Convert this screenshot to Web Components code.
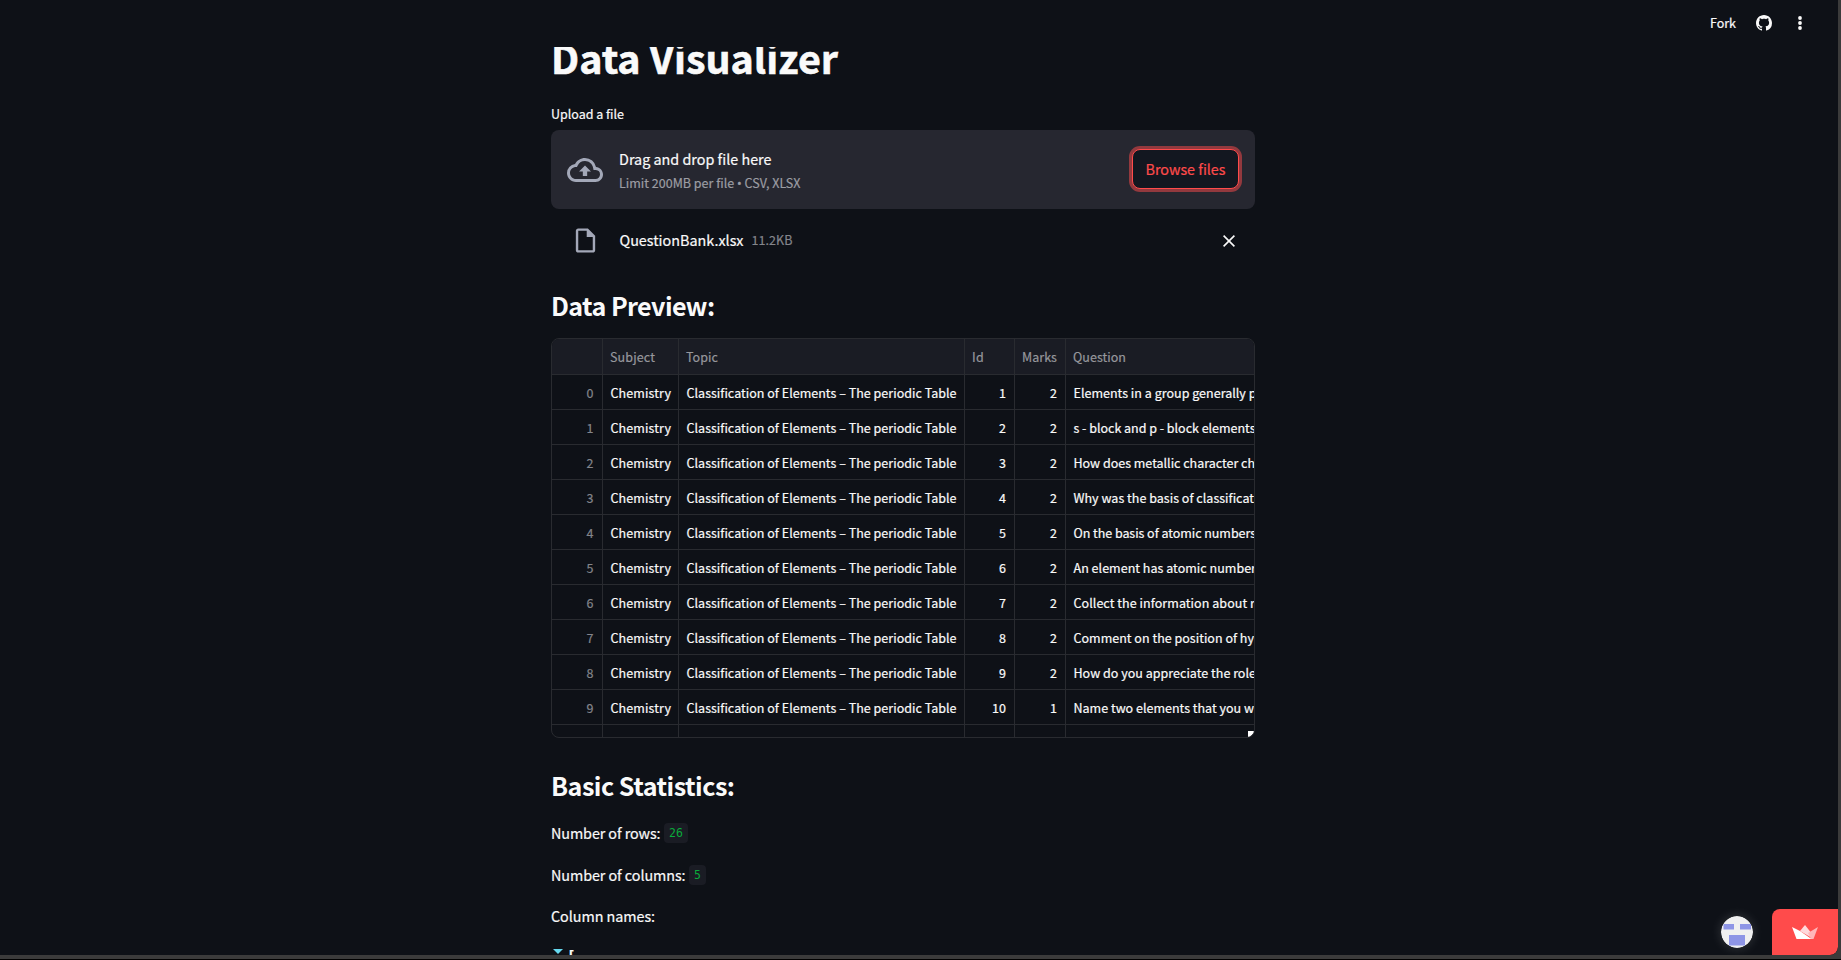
<!DOCTYPE html>
<html lang="en">
<head>
<meta charset="utf-8">
<title>Data Visualizer</title>
<style>
html,body{margin:0;height:100%;overflow:hidden;background:#0e1117}
body{font-family:"Noto Sans CJK SC","Noto Sans",sans-serif;color:#fafafa;-webkit-text-stroke:.2px}
</style>
</head>
<body>
<app-window>
  <app-toolbar slot="toolbar"></app-toolbar>
  <section-title level="1">Data Visualizer</section-title>
  <file-uploader label="Upload a file">
    <uploaded-file name="QuestionBank.xlsx" size="11.2KB"></uploaded-file>
  </file-uploader>
  <section-title level="2">Data Preview:</section-title>
  <data-grid></data-grid>
  <section-title level="2" class="stats">Basic Statistics:</section-title>
  <stat-line value="26" style="--w:109.500px">Number of rows:</stat-line>
  <stat-line value="5" style="--w:134.500px">Number of columns:</stat-line>
  <stat-line style="--w:104px">Column names:</stat-line>
  <json-view></json-view>
  <host-badges slot="badges"></host-badges>
</app-window>
<script>
const make = (tag, html, after) => customElements.define(tag, class extends HTMLElement {
  constructor(){ super(); this.attachShadow({mode:'open'}); }
  connectedCallback(){
    this.shadowRoot.innerHTML = typeof html === 'function' ? html(this) : html;
    if (after) after(this);
  }
});

/* Text run stretched by tracking to an exact advance width */
customElements.define('fit-text', class extends HTMLElement {
  constructor(){
    super();
    this.attachShadow({mode:'open'}).innerHTML =
      '<style>:host{display:inline-block;white-space:pre}span{display:inline-block}</style><span><slot></slot></span>';
  }
  connectedCallback(){
    const w = parseFloat(this.getAttribute('w'));
    if (!w) return;
    const s = this.shadowRoot.querySelector('span');
    const n = this.textContent.length;
    const now = s.getBoundingClientRect().width;
    s.style.letterSpacing = ((w - now) / n) + 'px';
  }
});

make('app-window', `<style>
:host{display:grid;grid-template:955px 5px / 1838px 3px;width:1841px;height:960px;background:#3b3b3b;overflow:hidden}
.view{grid-area:1/1;background:#0e1117;overflow:hidden;position:relative;display:flex;flex-direction:column;border-bottom-right-radius:8px}
main{flex:1;width:704px;padding-left:551px;display:flex;flex-direction:column;overflow:hidden}
.badges{position:absolute;right:0;bottom:0}
.edge{grid-area:2/1/3/3;background:#000;margin-top:4px}
</style><div class="view"><slot name="toolbar"></slot><main><slot></slot></main><div class="badges"><slot name="badges"></slot></div></div><div class="edge"></div>`);

make('app-toolbar', `<style>
:host{display:flex;height:47px;flex:none;align-items:center;justify-content:flex-end;padding:0 30px 1px 0;box-sizing:border-box;color:#fafafa;font-size:12.5px}
.fork{margin:-1px 20px 0 0}
svg{display:block;fill:#fafafa}
.gh{margin-right:20px}
</style><fit-text class="fork" w="26">Fork</fit-text>
<svg class="gh" width="16" height="16" viewBox="0 0 16 16"><path d="M8 0C3.58 0 0 3.58 0 8c0 3.54 2.29 6.53 5.47 7.59.4.07.55-.17.55-.38 0-.19-.01-.82-.01-1.49-2.01.37-2.53-.49-2.69-.94-.09-.23-.48-.94-.82-1.13-.28-.15-.68-.52-.01-.53.63-.01 1.08.58 1.23.82.72 1.21 1.87.87 2.33.66.07-.52.28-.87.51-1.07-1.78-.2-3.64-.89-3.64-3.95 0-.87.31-1.59.82-2.15-.08-.2-.36-1.02.08-2.12 0 0 .67-.21 2.2.82.64-.18 1.32-.27 2-.27s1.36.09 2 .27c1.53-1.04 2.2-.82 2.2-.82.44 1.1.16 1.92.08 2.12.51.56.82 1.27.82 2.15 0 3.07-1.87 3.75-3.65 3.95.29.25.54.73.54 1.48 0 1.07-.01 1.93-.01 2.2 0 .21.15.46.55.38A8.01 8.01 0 0 0 16 8c0-4.42-3.58-8-8-8z"/></svg>
<svg width="16" height="16" viewBox="0 0 16 16"><circle cx="8" cy="3" r="1.9"/><circle cx="8" cy="8" r="1.9"/><circle cx="8" cy="13" r="1.9"/></svg>`);

make('section-title', el => {
  const one = el.getAttribute('level') === '1';
  const stats = el.classList.contains('stats');
  return `<style>
:host{display:block;flex:none;${one ? 'height:58px;margin-top:0' : 'height:36px;margin-top:' + (stats ? '29px;margin-bottom:18' : 16) + 'px'}}
h1,h2{margin:0;font-weight:700;white-space:nowrap}
h1{font-size:39.4px;line-height:52px;transform:translateY(-16px);-webkit-text-stroke:.6px}
h2{font-size:25.1px;line-height:36px;-webkit-text-stroke:0}
</style>${one ? '<h1>' : '<h2>'}<fit-text w="${one ? 287 : stats ? 183.5 : 163.5}">${el.textContent}</fit-text>${one ? '</h1>' : '</h2>'}`;
});

make('file-uploader', el => `<style>
:host{display:block;flex:none}
.label{font-size:12.5px;line-height:18px;height:25px}
.drop{height:79px;border-radius:8px;background:#262730;display:flex;align-items:center;padding:0 16px 1px;box-sizing:border-box}
.cloud{fill:#a3a8b8;width:36px;height:36px;margin:1px 16px 0 0;flex:none}
.text{flex:1;display:flex;flex-direction:column;padding-top:3px}
.big{font-size:14.35px;line-height:25px}
.small{font-size:12.5px;line-height:24px;color:#9c9da3}
.dot{font-family:"Noto Sans",sans-serif}
button{font:14.35px/24px "Noto Sans CJK SC","Noto Sans",sans-serif;color:#ff4b4b;background:#131720;border:1px solid #ff4b4b;border-radius:8px;width:107px;height:40px;padding:0;box-shadow:0 0 0 3px rgba(255,75,75,.5)}
</style><div class="label"><fit-text w="73">${el.getAttribute('label')}</fit-text></div>
<div class="drop"><svg class="cloud" viewBox="0 0 24 24"><path d="M19.35 10.04A7.49 7.49 0 0 0 12 4C9.11 4 6.6 5.64 5.35 8.04A5.994 5.994 0 0 0 0 14c0 3.31 2.69 6 6 6h13c2.76 0 5-2.24 5-5 0-2.64-2.05-4.78-4.65-4.96zM19 18H6c-2.21 0-4-1.79-4-4 0-2.05 1.53-3.76 3.56-3.97l1.07-.11.5-.95A5.469 5.469 0 0 1 12 6c2.62 0 4.88 1.86 5.39 4.43l.3 1.5 1.53.11A2.98 2.98 0 0 1 22 15c0 1.65-1.35 3-3 3zM8 13h2.55v3h2.9v-3H16l-4-4z"/></svg>
<div class="text"><fit-text class="big" w="152.5">Drag and drop file here</fit-text><fit-text class="small" w="181.5">Limit 200MB per file <span class="dot">•</span> CSV, XLSX</fit-text></div>
<button><fit-text w="80">Browse files</fit-text></button></div><slot></slot>`);

make('uploaded-file', el => `<style>
:host{display:flex;height:62px;align-items:center;padding:0 16px 0 24px}
.doc{fill:#a3a8b8;width:29px;height:29px;margin:1px 0 0 -4px;flex:none}
.name{font-size:14.35px;margin:-2px 0 0 19.5px}
.size{font-size:12.5px;color:#83858b;margin:-1px 0 0 8px;flex:1}
.x{width:20px;height:20px;flex:none;margin-top:1px}
</style><svg class="doc" viewBox="0 0 24 24"><path d="M14 2H6c-1.1 0-1.99.9-1.99 2L4 20c0 1.1.89 2 1.99 2H18c1.1 0 2-.9 2-2V8l-6-6zM6 20V4h7v5h5v11H6z"/></svg>
<fit-text class="name" w="124">${el.getAttribute('name')}</fit-text><fit-text class="size" w="41">${el.getAttribute('size')}</fit-text>
<svg class="x" viewBox="0 0 20 20"><path d="M4.6 4.6l10.8 10.8M15.4 4.6L4.6 15.4" stroke="#fafafa" stroke-width="1.6" fill="none"/></svg>`);

const topic = 'Classification of Elements – The periodic Table';
const questions = [['Elements in a group generally p',183],['s - block and p - block elements',182],['How does metallic character ch',181.5],['Why was the basis of classificat',180.5],['On the basis of atomic numbers',182.5],['An element has atomic number',182.5],['Collect the information about r',181.5],['Comment on the position of hy',180.5],['How do you appreciate the role',182.5],['Name two elements that you w',180.5]];
make('data-grid', () => `<style>
:host{display:block;flex:none;margin-top:15px;height:400px;width:704px;box-sizing:border-box;border:1px solid #292b30;border-radius:8px;overflow:hidden;position:relative;font-size:12.5px}
.row{display:grid;grid-template-columns:51px 76px 286px 50px 51px 1fr;height:35px}
.row>div{border-right:1px solid #292b30;border-bottom:1px solid #292b30;padding:0 7px 0 7.500px;display:flex;align-items:center;overflow:hidden;white-space:nowrap;box-sizing:border-box}
.row>div:last-child{border-right:0;padding-right:0}
.row.head{height:36px;background:#1a1c24;color:#96979c}
.row.head>div{padding-left:7px}
.row>.num{justify-content:flex-end;padding-right:8px}
.row>.idx{color:#83858b;padding-right:8.500px}
.grip{position:absolute;right:0;bottom:0;width:6px;height:6px}
</style>
<div class="row head"><div></div><div><fit-text w="45">Subject</fit-text></div><div><fit-text w="32">Topic</fit-text></div><div><fit-text w="12">Id</fit-text></div><div><fit-text w="35">Marks</fit-text></div><div><fit-text w="53">Question</fit-text></div></div>
${questions.map((q, i) => `<div class="row"><div class="num idx">${i}</div><div><fit-text w="60.5">Chemistry</fit-text></div><div><fit-text w="270">${topic}</fit-text></div><div class="num">${i + 1}</div><div class="num">${i === 9 ? 1 : 2}</div><div><fit-text w="${q[1]}">${q[0]}</fit-text></div></div>`).join('')}
<div class="row"><div></div><div></div><div></div><div></div><div></div><div></div></div>
<svg class="grip" viewBox="0 0 6 6"><path d="M0 0H6V2L2 6H0z" fill="#fff"/></svg>`);

make('stat-line', el => {
  const v = el.getAttribute('value');
  return `<style>
:host{display:flex;flex:none;height:24px;margin-bottom:17.6px;align-items:center;font-size:14.35px;line-height:24px}
code{font:11.5px/20px "DejaVu Sans Mono",monospace;-webkit-text-stroke:0;color:#09ab3b;background:#1a1c24;border-radius:4px;height:20px;padding:0 5px;margin-left:3.500px}
</style><fit-text w="${parseFloat(el.style.getPropertyValue('--w'))}">${el.textContent}</fit-text>${v ? `<code><fit-text w="${v.length * 7}">${v}</fit-text></code>` : ''}`;
});

make('json-view', `<style>
:host{display:flex;flex:none;height:20px;gap:4px;padding-left:2px;margin-top:-1px}
.t{width:10px;height:5px;margin-top:4px;fill:#66d9ef}
.b{font:bold 14px/20px "DejaVu Sans Mono",monospace;margin-top:1px}
</style><svg class="t" viewBox="0 0 10 5"><path d="M0 0H10L5 5z"/></svg><div class="b">[</div>`);

make('host-badges', `<style>
:host{display:flex;align-items:center;gap:19px}
.bot{width:32px;height:32px;border-radius:50%;box-shadow:0 0 12px rgba(255,255,255,.16)}
.st{width:66px;height:46px;background:#ff4b4b;border-radius:8px 0 8px 0;display:flex;align-items:center;justify-content:center}
</style><svg class="bot" viewBox="0 0 32 32"><defs><clipPath id="c"><circle cx="16" cy="16" r="16"/></clipPath></defs><g clip-path="url(#c)"><path fill="#f0f0f0" d="M0 0h32v32H0z"/><path fill="#8e95e6" d="M2.5 8H13v5.500H2.500zM19 8h11v5.500H19zM8 19h16v10.500H8z"/></g></svg>
<div class="st"><svg width="26" height="15" viewBox="0 0 26 15"><path fill="#ffd9dc" d="M8 6L13 0l5.500 7 1.500 6z"/><path fill="#ffb6ba" d="M26 2L21.500 14H19L16 8z"/><path fill="#fff" d="M0 2L8 6l11.500 8H4.500z"/></svg></div>`);
</script>
</body>
</html>
